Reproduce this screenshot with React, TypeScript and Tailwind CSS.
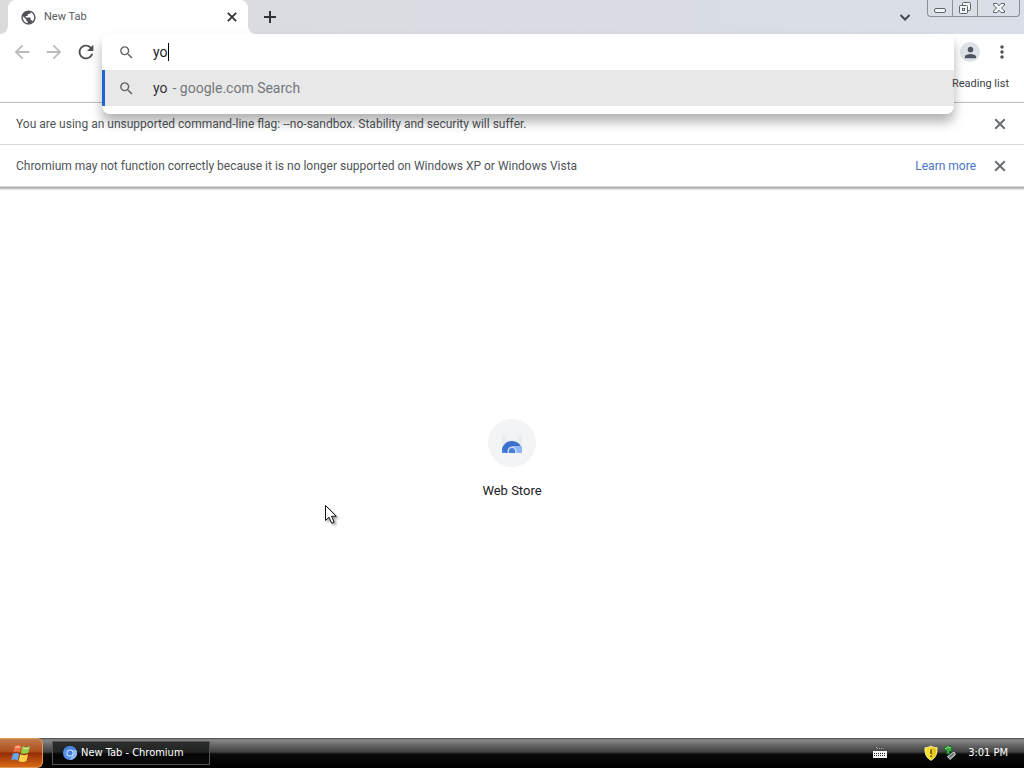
import React, { useState } from "react";
import {
  MdArrowBack,
  MdArrowForward,
  MdMoreVert,
  MdPerson,
  MdPublic,
  MdRefresh,
  MdSearch,
} from "react-icons/md";

function CrossIcon({ size }: { size: number }) {
  return (
    <svg width={size} height={size} viewBox="0 0 16 16" aria-hidden="true">
      <path d="M3.200 3.200L12.800 12.800M12.800 3.200L3.200 12.800" stroke="currentColor" strokeWidth="2" />
    </svg>
  );
}

function PlusIcon() {
  return (
    <svg width="20" height="20" viewBox="0 0 20 20" aria-hidden="true">
      <path d="M10 4V16M4 10H16" stroke="currentColor" strokeWidth="2" />
    </svg>
  );
}

function ChevronIcon() {
  return (
    <svg width="18" height="18" viewBox="0 0 18 18" aria-hidden="true">
      <path d="M4.500 7L9 11.500L13.500 7" fill="none" stroke="currentColor" strokeWidth="2" />
    </svg>
  );
}

function MinimizeGlyph() {
  return (
    <svg width="14" height="14" viewBox="0 0 14 14" aria-hidden="true">
      <rect x="1.5" y="7.5" width="11" height="4" rx="1.5" fill="#f4f5f7" stroke="#5f646b" />
    </svg>
  );
}

function RestoreGlyph() {
  return (
    <svg width="14" height="14" viewBox="0 0 14 14" aria-hidden="true">
      <rect x="4.5" y="1.5" width="8" height="8" rx="1" fill="#f4f5f7" stroke="#5f646b" />
      <rect x="1.5" y="4.5" width="8" height="8" rx="1" fill="#f4f5f7" stroke="#5f646b" />
      <rect x="4.5" y="7.5" width="2" height="2" fill="#fff" stroke="#5f646b" />
    </svg>
  );
}

function CloseGlyph() {
  return (
    <svg width="14" height="14" viewBox="0 0 14 14" aria-hidden="true">
      <path
        d="M1.5 2.5H5L7 4.8L9 2.5H12.5V4L9.5 7L12.5 10V11.5H9L7 9.2L5 11.5H1.5V10L4.5 7L1.5 4Z"
        fill="#f4f5f7"
        stroke="#5f646b"
        strokeLinejoin="round"
      />
    </svg>
  );
}

function ChromiumIcon() {
  return (
    <svg width="14" height="14" viewBox="0 0 14 14" aria-hidden="true">
      <circle cx="7" cy="7" r="7" fill="#5b93ea" />
      <path d="M7 0A7 7 0 0 1 13.3 4H7A3 3 0 0 0 4 7L1.4 2.8A7 7 0 0 1 7 0Z" fill="#4a82dc" />
      <path d="M13.3 4A7 7 0 0 1 7 14L10 8.5A3 3 0 0 0 9.5 4Z" fill="#8db9f8" />
      <circle cx="7" cy="7" r="3.5" fill="#d5e5ff" />
      <circle cx="7" cy="7" r="2.5" fill="#3f7de0" />
    </svg>
  );
}

function WebStoreIcon() {
  return (
    <svg width="24" height="24" viewBox="0 0 24 24" aria-hidden="true">
      <path d="M2 4h20v16a2 2 0 0 1-2 2H4a2 2 0 0 1-2-2Z" fill="#e9ebed" />
      <rect x="6" y="3" width="12" height="6" rx="3" fill="#f3f4f5" />
      <path d="M2 22v-3a10 9 0 0 1 20 0v3Z" fill="#3b70cf" />
      <path d="M12 15h9.2a10 9 0 0 1 .8 4v3H14Z" fill="#8fb5f5" />
      <path d="M2 18l5 4H2Z" fill="#4c86e4" />
      <path d="M7.5 22v-2a4.5 4.5 0 0 1 9 0v2Z" fill="#c5dafb" />
      <path d="M9 22v-2a3 3 0 0 1 6 0v2Z" fill="#4680dc" />
    </svg>
  );
}

function WindowsFlag() {
  return (
    <svg width="24" height="24" viewBox="-1 -1 21 21" aria-hidden="true">
      <path d="M4.2 3.2C6 2 8 2.2 9.8 3.2L8.3 9C6.5 8 4.6 8 2.7 9Z" fill="#f0703f" />
      <path d="M10.7 3.7C12.5 4.7 15 4.7 17.6 3.3L16 9.3C13.6 10.5 11.3 10.4 9.2 9.4Z" fill="#93cf45" />
      <path d="M2.4 10.2C4.2 9.2 6.2 9.2 8 10.2L6.5 16C4.7 15 2.8 15 .9 16Z" fill="#62a9ed" />
      <path d="M8.9 10.7C11 11.7 13.3 11.7 15.7 10.5L14.2 16.5C11.8 17.7 9.5 17.5 7.4 16.5Z" fill="#fbd24c" />
      <path d="M4.5 4.6C6 3.9 7.5 4 8.8 4.6M11.3 5.2C13 5.9 14.8 5.7 16.3 5.1" stroke="#fff" strokeOpacity=".6" fill="none" />
    </svg>
  );
}

function KeyboardIcon() {
  return (
    <svg width="14" height="14" viewBox="0 0 14 14" aria-hidden="true">
      <path d="M3.5 1v1.5h7V4" fill="none" stroke="#a5a5a5" strokeDasharray="1 1" />
      <rect x="0" y="5" width="14" height="7" fill="#f4f4f4" />
      <path d="M1 7.5h12M1 9.5h12" stroke="#222" strokeDasharray="1 1" />
    </svg>
  );
}

function ShieldIcon() {
  return (
    <svg width="14" height="16" viewBox="0 0 14 16" aria-hidden="true">
      <path d="M7 1C9 2.3 11 2.7 13 2.7C13.3 9 11.5 13 7 15.3C2.5 13 .7 9 1 2.7C3 2.7 5 2.3 7 1Z" fill="#f7e02e" stroke="#f6ee9a" />
      <path d="M7 2v12.5C10.8 12.3 12.4 9 12.3 3.5C10 3.4 8.5 3 7 2Z" fill="#e8c71a" />
      <path d="M7 4.5v4.500M7 10.5v1.5" stroke="#5a4700" strokeWidth="1.5" />
    </svg>
  );
}

function SafeRemoveIcon() {
  return (
    <svg width="16" height="16" viewBox="0 0 16 16" aria-hidden="true">
      <path d="M5.5 11.5L12 7l1.5 2.5L8 14.5Z" fill="#8e9598" stroke="#d5d8da" />
      <path d="M7.5 12l4-3" stroke="#4c5356" />
      <path d="M1.5 4L5.5 .8L10 1.8L9.5 6.5L7.5 6.5L8 9.5L4.5 8.5L5 6Z" fill="#3fac46" stroke="#1b6424" />
      <path d="M3 3.8L5.8 2l3 .8" stroke="#8de18d" fill="none" />
    </svg>
  );
}

function Pointer() {
  return (
    <svg
      className="pointer-events-none absolute left-[324px] top-[504px] drop-shadow-[2px_2px_1px_rgba(0,0,0,0.35)]"
      width="14"
      height="22"
      viewBox="0 0 14 22"
      aria-hidden="true"
    >
      <path
        d="M1.5 1.5V16.5L5 13.2L7.7 19.3L10.2 18.2L7.6 12.3H12.3Z"
        fill="#fff"
        stroke="#111"
      />
    </svg>
  );
}

function TabStrip() {
  return (
    <header className="flex h-[34px] items-start bg-gradient-to-r from-[#d9dbdf] to-[#dadee6] pl-2">
      <div className="relative flex h-[34px] w-60 items-center rounded-t-lg bg-white pl-3 pr-2">
        <svg className="absolute -left-2 bottom-0" width="8" height="8" viewBox="0 0 8 8" aria-hidden="true">
          <path d="M8 0v8H0a8 8 0 0 0 8-8Z" fill="#fff" />
        </svg>
        <svg className="absolute -right-2 bottom-0" width="8" height="8" viewBox="0 0 8 8" aria-hidden="true">
          <path d="M0 0v8h8a8 8 0 0 1-8-8Z" fill="#fff" />
        </svg>
        <MdPublic size={17} className="text-[#50545a]" aria-hidden="true" />
        <span className="ml-[7px] flex-1 text-[11px] text-[#55595d]">New Tab</span>
        <button type="button" aria-label="Close tab" className="flex size-4 items-center justify-center text-[#303336]">
          <CrossIcon size={14} />
        </button>
      </div>
      <button type="button" aria-label="New tab" className="ml-3 flex h-[34px] w-5 items-center justify-center text-[#303336]">
        <PlusIcon />
      </button>
      <div className="flex-1" />
      <button type="button" aria-label="Search tabs" className="mr-3 flex h-[34px] w-5 items-center justify-center text-[#45494d]">
        <ChevronIcon />
      </button>
      <div className="mr-1 flex h-[17px] divide-x divide-[#8b9097] rounded-b border border-t-0 border-[#8b9097]">
        <button type="button" aria-label="Minimize" className="flex w-[25px] items-center justify-center">
          <MinimizeGlyph />
        </button>
        <button type="button" aria-label="Restore" className="flex w-[25px] items-center justify-center">
          <RestoreGlyph />
        </button>
        <button type="button" aria-label="Close window" className="flex w-[41px] items-center justify-center">
          <CloseGlyph />
        </button>
      </div>
    </header>
  );
}

function Omnibox() {
  const [query, setQuery] = useState("yo");
  return (
    <form
      role="search"
      onSubmit={(e) => e.preventDefault()}
      className="absolute inset-x-0 top-0 z-10 rounded-lg bg-white pb-2 text-sm shadow-[0_8px_12px_rgba(0,0,0,0.3)]"
    >
      <div className="flex h-9 items-center pl-4">
        <MdSearch size={17} className="text-[#5f6368]" aria-hidden="true" />
        <input
          aria-label="Address and search bar"
          value={query}
          onChange={(e) => setQuery(e.target.value)}
          className="ml-[18px] field-sizing-content text-[#202124] outline-none"
        />
        <span className="h-[18px] w-px bg-black" aria-hidden="true" />
      </div>
      <button type="button" className="flex h-9 w-full items-center border-l-[3px] border-[#1f66d0] bg-[#e8e8e8] pl-[13px] text-left">
        <MdSearch size={17} className="text-[#5f6368]" aria-hidden="true" />
        <span className="ml-[18px] text-[#303134]">{query}</span>
        <span className="ml-[5px] text-[#73777b]">- google.com Search</span>
      </button>
    </form>
  );
}

function Toolbar() {
  return (
    <div className="border-b border-[#d5d7da] bg-white">
      <div className="flex h-9">
        <nav className="flex w-[102px] items-center gap-[10px] pl-[11px]" aria-label="Navigation">
          <button type="button" aria-label="Back" disabled className="text-[#b9bbbe]">
            <MdArrowBack size={22} />
          </button>
          <button type="button" aria-label="Forward" disabled className="text-[#b9bbbe]">
            <MdArrowForward size={22} />
          </button>
          <button type="button" aria-label="Reload" className="text-[#4c5055]">
            <MdRefresh size={22} />
          </button>
        </nav>
        <div className="relative flex-1">
          <Omnibox />
        </div>
        <div className="flex w-[70px] items-center pl-[6px]">
          <button type="button" aria-label="Profile" className="flex size-5 items-center justify-center rounded-full bg-[#dee1e6] text-[#4c5660]">
            <MdPerson size={17} />
          </button>
          <button type="button" aria-label="Menu" className="ml-3 text-[#4c5055]">
            <MdMoreVert size={20} />
          </button>
        </div>
      </div>
      <div className="flex h-8 items-center justify-end pb-1 pr-[15px]">
        <button type="button" className="relative z-20 text-[11px] text-[#3c4043]">
          Reading list
        </button>
      </div>
    </div>
  );
}

function InfoBar({ text, link }: { text: string; link?: string }) {
  return (
    <div className="flex h-[42px] items-center border-b border-[#d5d7da] bg-white px-4 text-xs text-[#505458]">
      <p className="flex-1">{text}</p>
      {link && (
        <a href="#learn" className="mr-4 text-[#4a74c4]">
          {link}
        </a>
      )}
      <button type="button" aria-label="Dismiss" className="text-[#6b6f73]">
        <CrossIcon size={16} />
      </button>
    </div>
  );
}

function Taskbar() {
  return (
    <footer className="flex h-[30px] items-center bg-[linear-gradient(180deg,#4b4b4b_0,#8a8a8a_2px,#606060_8px,#414141_14px,#0b0b0b_16px,#000_30px)] font-['DejaVu_Sans_Condensed','DejaVu_Sans',sans-serif] text-white">
      <button
        type="button"
        aria-label="Start"
        className="flex h-[30px] w-[43px] items-center justify-center rounded-r-md border border-l-0 border-[#e09a55] bg-[linear-gradient(180deg,#c07a4c_0,#b04e1c_45%,#932c08_50%,#d86a14_100%)]"
      >
        <WindowsFlag />
      </button>
      <button
        type="button"
        className="ml-[9px] flex h-6 w-[158px] items-center gap-1 border border-[#545454] bg-[linear-gradient(180deg,#2c2e2e_0,#222424_45%,#050505_55%,#090909_100%)] pl-[10px] text-[11px]"
      >
        <ChromiumIcon />
        New Tab - Chromium
      </button>
      <div className="flex flex-1 items-center justify-end pr-4 text-[11px]">
        <KeyboardIcon />
        <div className="ml-[37px] flex items-center gap-1">
          <ShieldIcon />
          <SafeRemoveIcon />
        </div>
        <time className="ml-[10px]">3:01 PM</time>
      </div>
    </footer>
  );
}

export default function App() {
  return (
    <div className="relative flex min-h-screen flex-col bg-white font-[Roboto,sans-serif]">
      <TabStrip />
      <Toolbar />
      <div className="shadow-[0_1px_2px_1px_rgba(0,0,0,0.35)]">
        <InfoBar text="You are using an unsupported command-line flag: --no-sandbox. Stability and security will suffer." />
        <InfoBar
          text="Chromium may not function correctly because it is no longer supported on Windows XP or Windows Vista"
          link="Learn more"
        />
      </div>
      <main className="flex flex-1 flex-col items-center justify-center pb-2">
        <a href="#webstore" className="flex flex-col items-center gap-4 text-[13px] leading-4 text-[#202124]">
          <span className="flex size-12 items-center justify-center rounded-full bg-[#f3f4f5]">
            <WebStoreIcon />
          </span>
          Web Store
        </a>
      </main>
      <Taskbar />
      <Pointer />
    </div>
  );
}
